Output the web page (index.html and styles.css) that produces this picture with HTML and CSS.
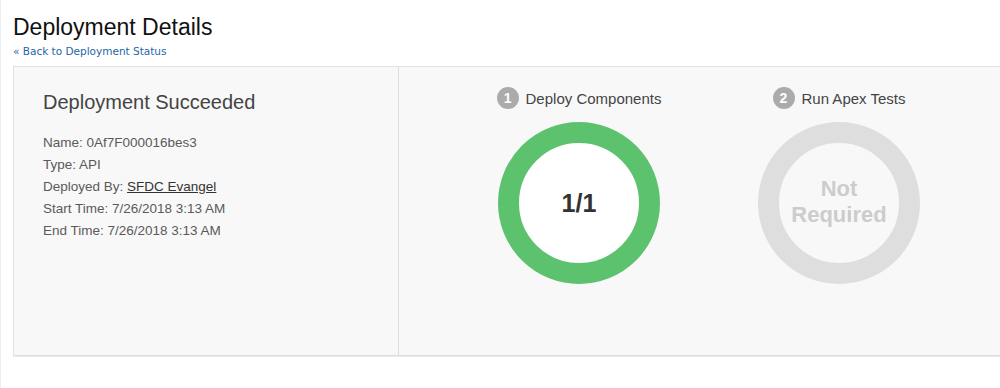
FILE: index.html
```html
<!DOCTYPE html>
<html>
<head>
<meta charset="utf-8">
<link rel="stylesheet" href="styles.css">
</head>
<body>
<div class="page">
  <h1 class="title">Deployment Details</h1>
  <a class="back" href="#">« Back to Deployment Status</a>
  <div class="panel">
    <div class="summary">
      <h2 class="status">Deployment Succeeded</h2>
      <ul class="details">
        <li>Name: 0Af7F000016bes3</li>
        <li>Type: API</li>
        <li>Deployed By: <a class="user" href="#">SFDC Evangel</a></li>
        <li>Start Time: 7/26/2018 3:13 AM</li>
        <li>End Time: 7/26/2018 3:13 AM</li>
      </ul>
    </div>
    <div class="steps">
      <div class="step">
        <div class="step-head"><span class="badge">1</span><span class="step-label">Deploy Components</span></div>
        <div class="donut done"><span class="count">1/1</span></div>
      </div>
      <div class="step">
        <div class="step-head"><span class="badge">2</span><span class="step-label">Run Apex Tests</span></div>
        <div class="donut skipped"><span class="na">Not<br>Required</span></div>
      </div>
    </div>
  </div>
</div>
</body>
</html>
```
FILE: styles.css
```css
html, body {
  margin: 0;
  padding: 0;
  background: #fff;
  overflow: hidden;
}
.page {
  height: 388px;
  box-sizing: border-box;
  border-left: 1px solid #ececec;
  padding: 13px 0 0 12px;
  font-family: "Liberation Sans", Arial, sans-serif;
}
.title {
  margin: 0;
  font-size: 23px;
  line-height: 28px;
  font-weight: normal;
  color: #111;
}
.back {
  display: block;
  margin-top: 3px;
  font-family: "DejaVu Sans", Verdana, sans-serif;
  font-size: 10.5px;
  line-height: 14px;
  color: #2566a6;
  text-decoration: none;
}
.panel {
  margin-top: 8px;
  width: 1010px;
  height: 290px;
  box-sizing: border-box;
  background: #f8f8f8;
  border: 1px solid #e2e2e2;
  border-bottom-color: #dcdcdc;
  box-shadow: 0 1px 0 #ececec;
  display: flex;
}
.summary {
  width: 385px;
  flex: none;
  border-right: 1px solid #dddddd;
  padding: 23px 0 0 29px;
  box-sizing: border-box;
}
.status {
  margin: 0;
  font-size: 20px;
  line-height: 24px;
  font-weight: normal;
  color: #444;
}
.details {
  list-style: none;
  margin: 18px 0 0;
  padding: 0;
  font-size: 13.5px;
  line-height: 22px;
  color: #5a5a5a;
}
.user {
  color: #333;
  text-decoration: underline;
}
.steps {
  display: flex;
  padding: 20px 0 0 50px;
}
.step {
  width: 260px;
  display: flex;
  flex-direction: column;
  align-items: center;
}
.step-head {
  display: flex;
  align-items: center;
  gap: 7px;
  height: 22px;
}
.badge {
  width: 22px;
  height: 22px;
  border-radius: 50%;
  background: #ababab;
  color: #fff;
  font-size: 14px;
  font-weight: bold;
  line-height: 22px;
  text-align: center;
}
.step-label {
  font-size: 15px;
  color: #444;
}
.donut {
  margin-top: 13px;
  width: 162px;
  height: 162px;
  box-sizing: border-box;
  border-radius: 50%;
  border: 21px solid #5dc26d;
  display: flex;
  align-items: center;
  justify-content: center;
  text-align: center;
  font-weight: bold;
}
.done {
  background: #fff;
}
.skipped {
  border-color: #dedede;
  background: #f8f8f8;
}
.count {
  font-size: 25px;
  color: #333;
}
.na {
  font-size: 22px;
  line-height: 26px;
  color: #cccccc;
  position: relative;
  top: -1px;
}
```
